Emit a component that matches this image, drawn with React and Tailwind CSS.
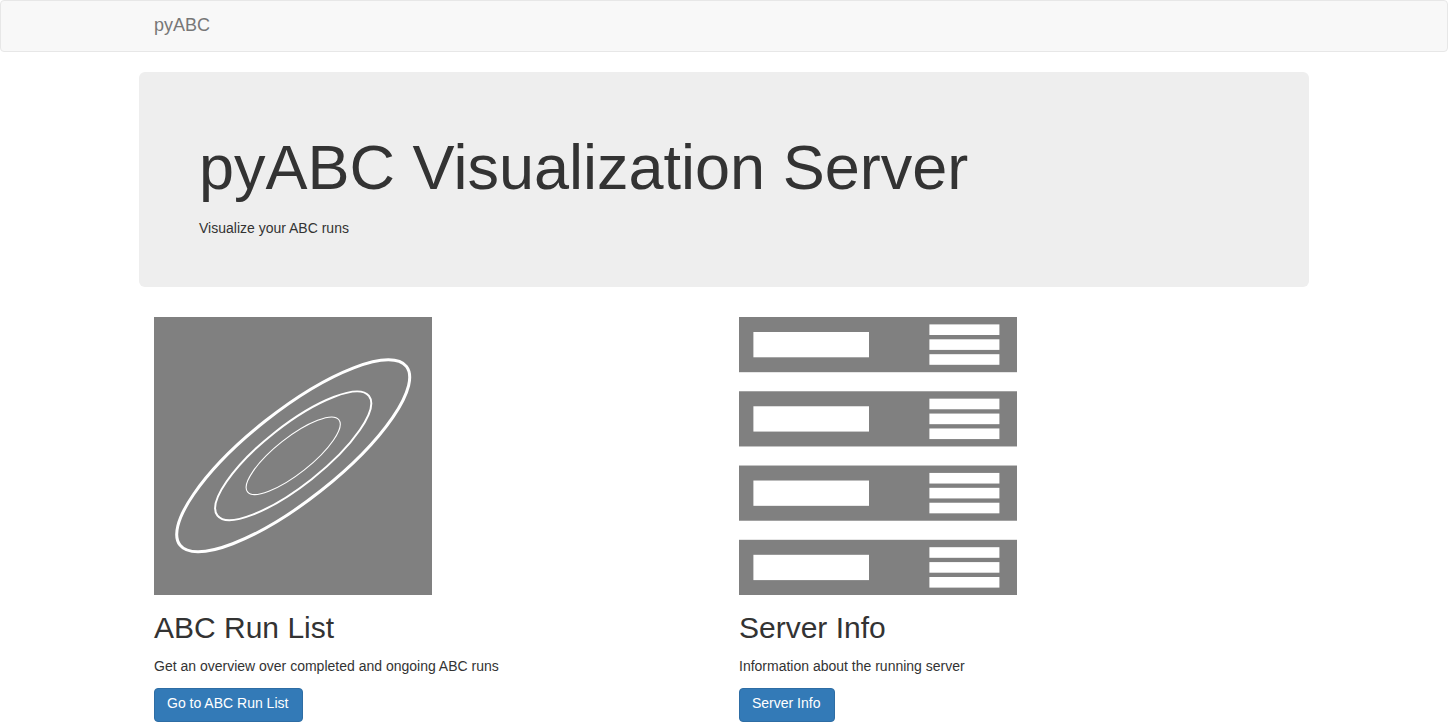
const contours = [
  { rx: 144.2, ry: 44.6, stroke: 3 },
  { rx: 96.5, ry: 29.8, stroke: 2 },
  { rx: 58.2, ry: 18, stroke: 1.1 },
];

function ContourIcon() {
  return (
    <svg viewBox="0 0 278 278" className="block size-[278px]" role="img" aria-label="ABC runs">
      <rect width="278" height="278" fill="#808080" />
      <g transform="translate(139.2 138.8) rotate(-38.3)" fill="none" stroke="#fff">
        {contours.map((c) => (
          <ellipse key={c.rx} rx={c.rx} ry={c.ry} strokeWidth={c.stroke} />
        ))}
      </g>
    </svg>
  );
}

function ServerIcon() {
  return (
    <svg viewBox="0 0 278 278" className="block size-[278px]" role="img" aria-label="Server">
      {[0, 74.27, 148.53, 222.8].map((y) => (
        <g key={y} transform={`translate(0 ${y})`}>
          <rect width="278" height="55.2" fill="#808080" />
          <rect x="14.4" y="15" width="115.6" height="25.3" fill="#fff" />
          {[7.4, 22.3, 37.2].map((slot) => (
            <rect key={slot} x="190.4" y={slot} width="70" height="10.6" fill="#fff" />
          ))}
        </g>
      ))}
    </svg>
  );
}

function Card({ icon, title, text, action, href }) {
  return (
    <section className="flex flex-col items-start px-[15px]">
      {icon}
      <h2 className="mt-4 mb-3 text-[30px] leading-[33px]">{title}</h2>
      <p className="mb-3 text-[14px] leading-5">{text}</p>
      <a
        href={href}
        className="rounded-[4px] border border-[#2e6da4] bg-[#337ab7] pt-1 pr-[14px] pb-2 pl-3 text-[14px] leading-5 text-white hover:bg-[#286090]"
      >
        {action}
      </a>
    </section>
  );
}

export default function App() {
  return (
    <div className="bg-white font-['Liberation_Sans',Arial,sans-serif] text-[#333]">
      <nav className="mb-5 rounded-[4px] border border-[#e7e7e7] bg-[#f8f8f8]">
        <div className="mx-auto flex max-w-[1170px] px-[15px]">
          <a href="#home" className="pt-[14px] pb-4 text-[18px] leading-5 text-[#777]">
            pyABC
          </a>
        </div>
      </nav>
      <main className="mx-auto max-w-[1170px]">
        <header className="mb-[30px] rounded-[6px] bg-[#eee] px-[60px] pt-[61px] pb-[49px]">
          <h1 className="mb-4 text-[63px] leading-[69px]">pyABC Visualization Server</h1>
          <p className="text-[14px] leading-5">Visualize your ABC runs</p>
        </header>
        <div className="grid grid-cols-2">
          <Card
            icon={<ContourIcon />}
            title="ABC Run List"
            text="Get an overview over completed and ongoing ABC runs"
            action="Go to ABC Run List"
            href="#abc"
          />
          <Card
            icon={<ServerIcon />}
            title="Server Info"
            text="Information about the running server"
            action="Server Info"
            href="#info"
          />
        </div>
      </main>
    </div>
  );
}
